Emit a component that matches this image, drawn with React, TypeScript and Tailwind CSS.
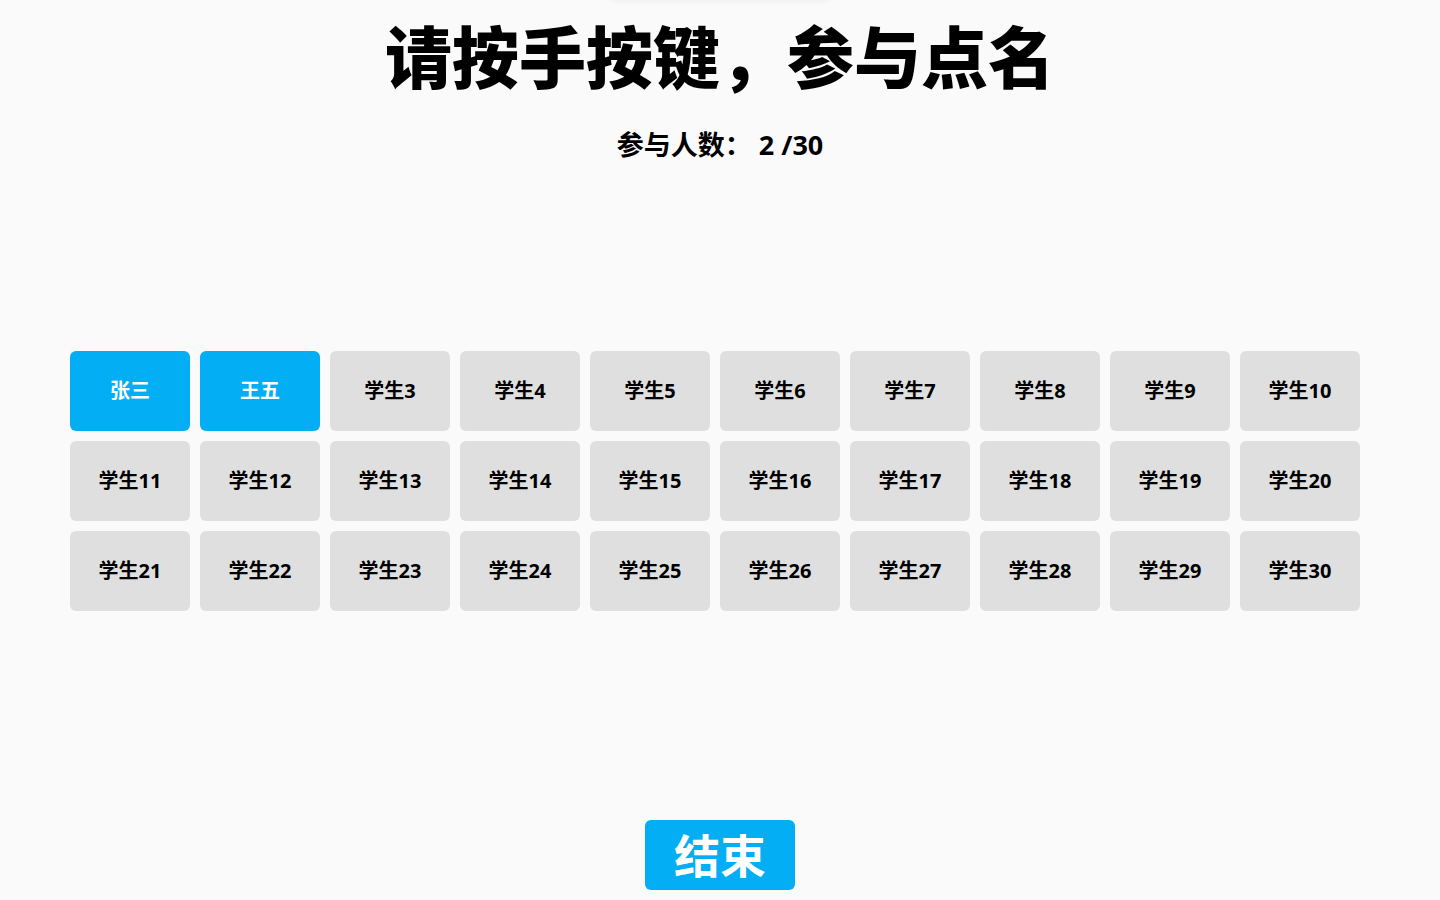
export default function App() {
  const students = Array.from({ length: 30 }, (_, i) =>
    i === 0 ? "张三" : i === 1 ? "王五" : `学生${i + 1}`
  );
  const joined = 2;

  return (
    <div
      className="min-h-screen w-full bg-[#fafafa] text-black flex flex-col items-center relative overflow-hidden"
      style={{ fontFamily: '"Noto Sans", "Noto Sans CJK SC", sans-serif' }}
    >
      {/* faint shadow from a panel just above the viewport */}
      <div className="absolute -top-[10px] left-1/2 -translate-x-1/2 w-[220px] h-[10px] bg-[#fafafa] shadow-[0_0_6px_rgba(0,0,0,0.08)] rounded-md" />

      <h1 className="mt-[24px] text-[67px] leading-none font-black">
        请按手按键，参与点名
      </h1>
      <p className="mt-[40px] text-[27px] leading-none font-bold">
        参与人数：&nbsp;{joined} /30
      </p>

      <div className="self-start ml-[70px] mt-[193px] grid grid-cols-10 gap-[10px]">
        {students.map((name, i) => (
          <div
            key={name}
            className={`w-[120px] h-[80px] rounded-md flex items-center justify-center text-[20px] font-bold ${
              i < joined ? "bg-[#03aef4] text-white" : "bg-[#dfdfdf] text-black"
            }`}
          >
            {name}
          </div>
        ))}
      </div>

      <button className="mt-[209px] w-[150px] h-[70px] rounded-md bg-[#03aef4] text-white text-[46px] font-bold leading-none flex items-center justify-center">
        结束
      </button>
    </div>
  );
}
